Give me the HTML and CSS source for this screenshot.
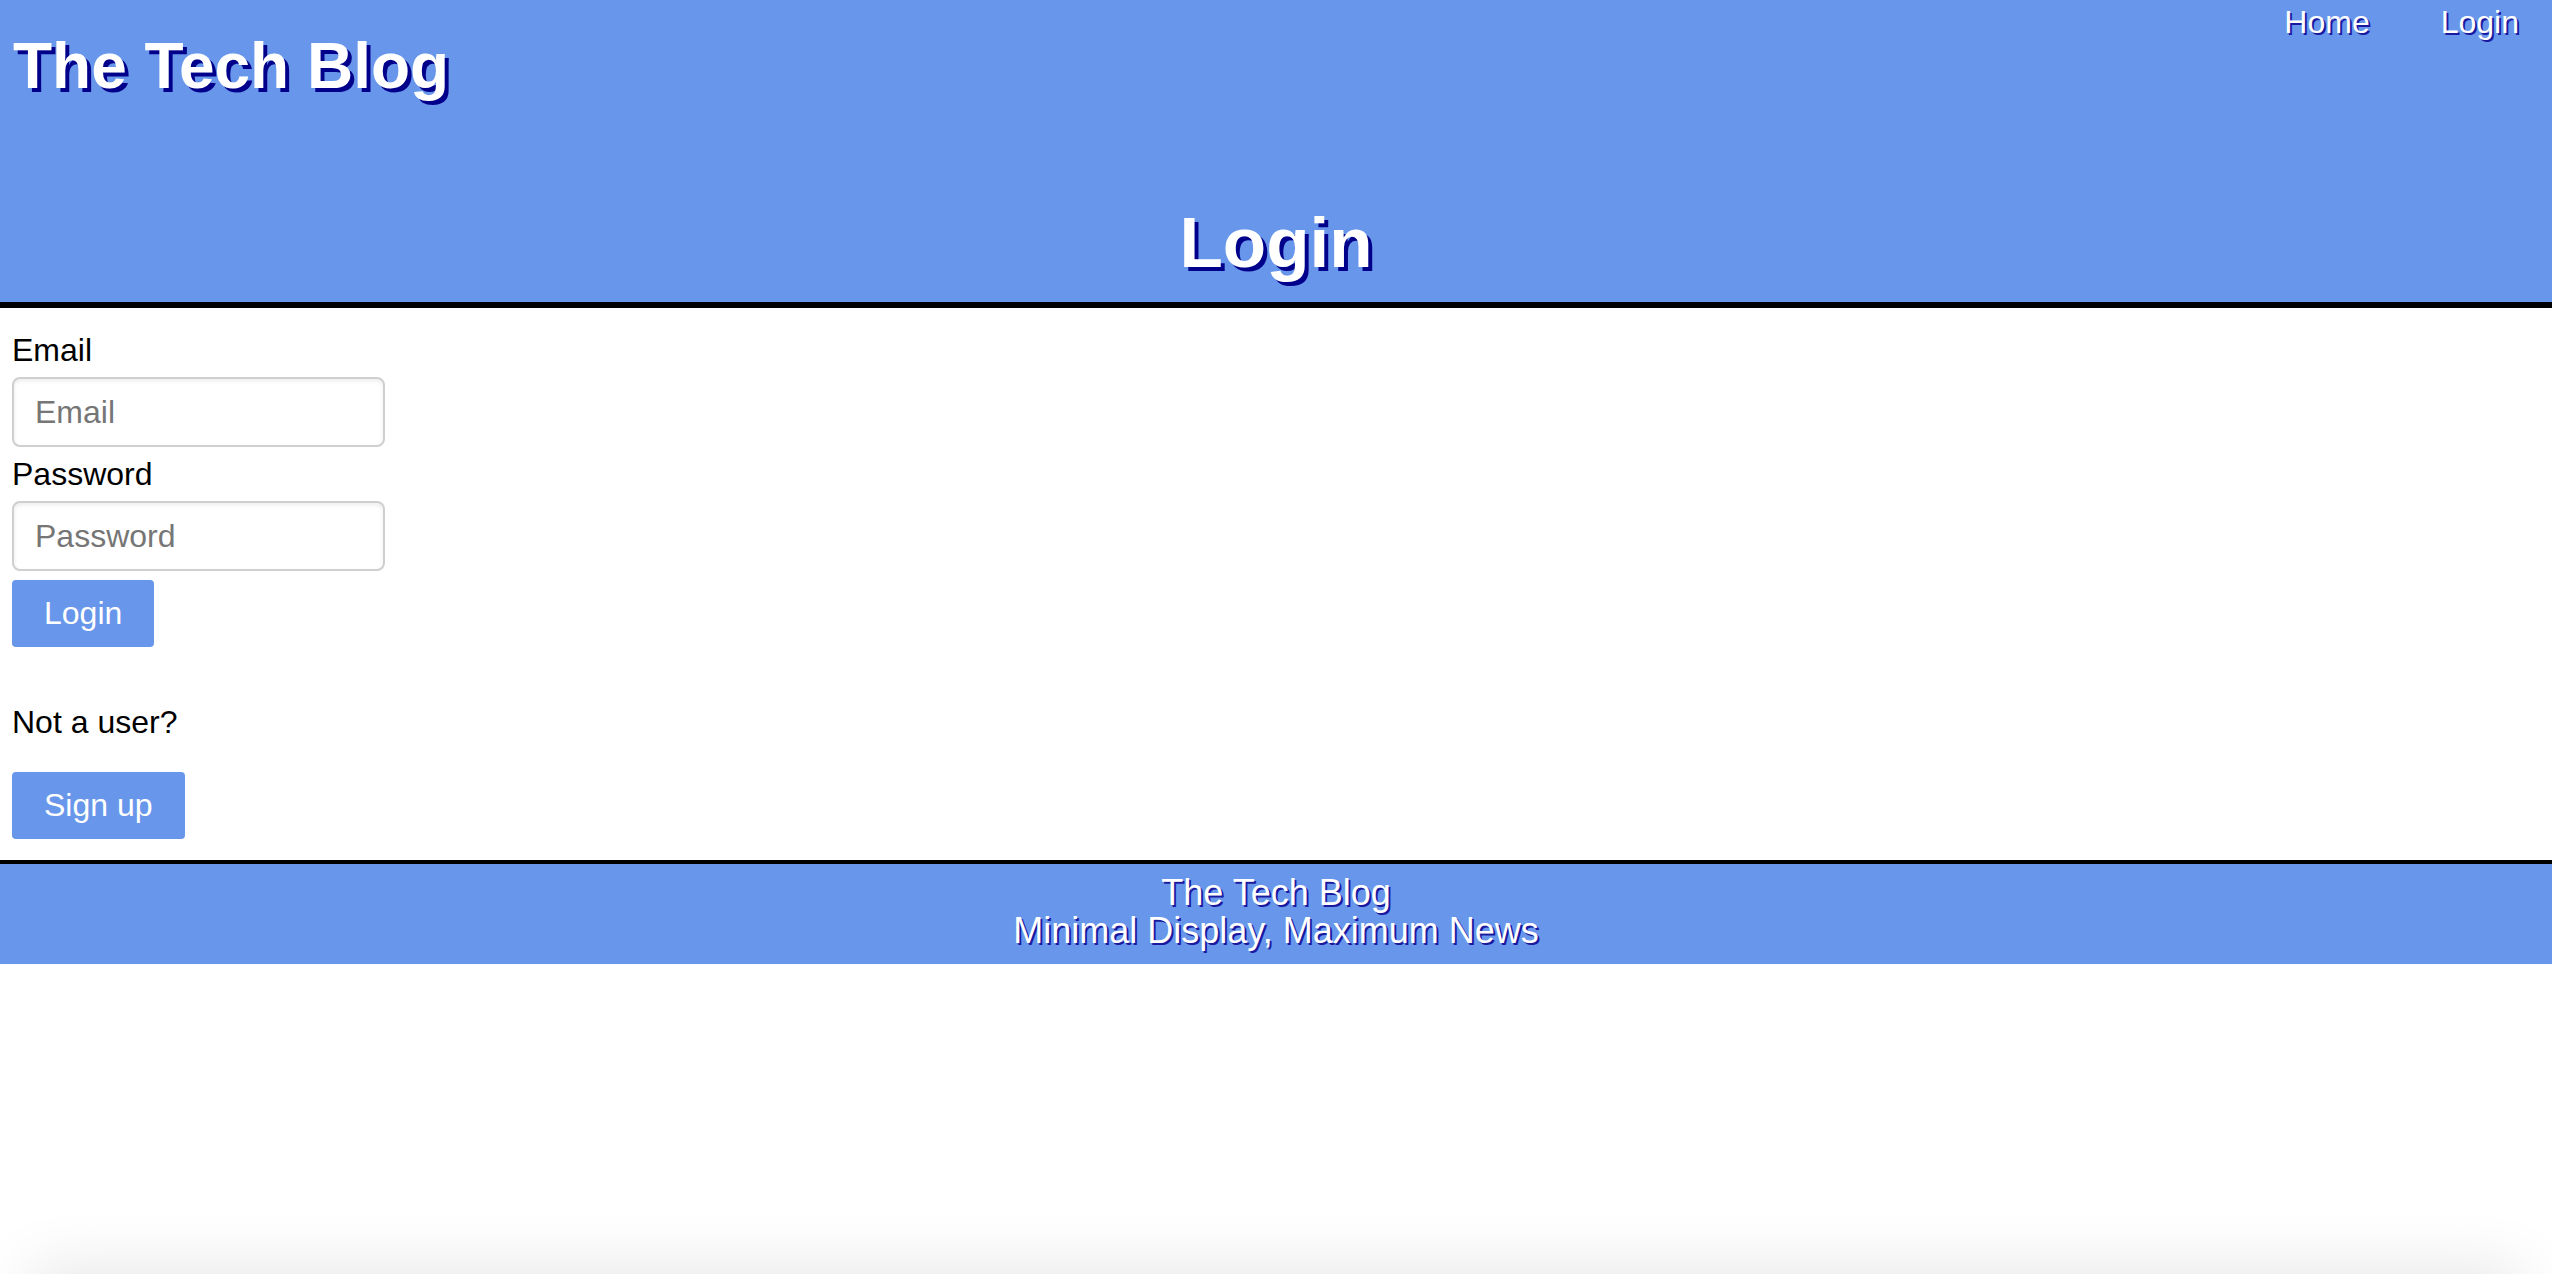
FILE: index.html
```html
<!DOCTYPE html>
<html lang="en">
<head>
<meta charset="utf-8">
<title>The Tech Blog - Login</title>
<link rel="stylesheet" href="styles.css">
</head>
<body>
<header class="site-header">
  <div class="topbar">
    <h1 class="brand">The Tech Blog</h1>
    <nav class="nav">
      <a class="nav-link" href="#">Home</a>
      <a class="nav-link" href="#">Login</a>
    </nav>
  </div>
  <h2 class="page-title">Login</h2>
</header>
<main class="content">
  <form class="login-form">
    <label class="field-label" for="email">Email</label>
    <input class="field-input" id="email" type="email" placeholder="Email">
    <label class="field-label field-label--spaced" for="password">Password</label>
    <input class="field-input" id="password" type="password" placeholder="Password">
    <button class="btn btn--login" type="button">Login</button>
  </form>
  <p class="signup-prompt">Not a user?</p>
  <button class="btn" type="button">Sign up</button>
</main>
<footer class="site-footer">
  <div class="footer-line">The Tech Blog</div>
  <div class="footer-line">Minimal Display, Maximum News</div>
</footer>
<div class="window-shadow"></div>
</body>
</html>
```
FILE: styles.css
```css
html, body {
  margin: 0;
  padding: 0;
  background: #ffffff;
}

body {
  font-family: "Liberation Sans", Arial, Helvetica, sans-serif;
  color: #000;
  font-size: 32px;
}

.site-header {
  background: #6796ea;
  border-bottom: 6px solid #000;
  padding-bottom: 20px;
}

.topbar {
  display: flex;
  justify-content: space-between;
  align-items: flex-start;
}

.brand {
  margin: 29px 0 0 13px;
  font-size: 64px;
  line-height: 74px;
  font-weight: bold;
  color: #fff;
  text-shadow: 4px 4px 0 #00008b;
}

.nav {
  display: flex;
  gap: 71px;
  padding: 4px 33px 0 0;
}

.nav-link {
  color: #fff;
  text-decoration: none;
  font-size: 32px;
  line-height: 37px;
  text-shadow: 2px 2px 0 #1a1aa0;
}

.page-title {
  margin: 101px 0 0;
  text-align: center;
  font-size: 71px;
  line-height: 78px;
  font-weight: bold;
  color: #fff;
  text-shadow: 4px 4px 0 #00008b;
}

.content {
  padding: 24px 12px 21px;
}

.login-form {
  display: flex;
  flex-direction: column;
  align-items: flex-start;
}

.field-label {
  display: block;
  font-size: 32px;
  line-height: 37px;
}

.field-label--spaced {
  margin-top: 9px;
}

.field-input {
  box-sizing: border-box;
  margin-top: 8px;
  width: 373px;
  height: 70px;
  padding: 0 21px;
  border: 2px solid #cfcfcf;
  border-radius: 8px;
  box-shadow: inset 0 2px 4px rgba(0, 0, 0, 0.08);
  font-family: "Liberation Sans", Arial, Helvetica, sans-serif;
  font-size: 32px;
  color: #000;
  background: #fff;
  outline: none;
}

.field-input::placeholder {
  color: #767676;
}

.btn {
  box-sizing: border-box;
  display: block;
  height: 67px;
  padding: 0 32px;
  border: none;
  border-radius: 4px;
  background: #6796ea;
  color: #fff;
  font-family: "Liberation Sans", Arial, Helvetica, sans-serif;
  font-size: 32px;
  line-height: 37px;
  cursor: pointer;
}

.btn--login {
  margin-top: 9px;
}

.signup-prompt {
  margin: 57px 0 31px;
  font-size: 32px;
  line-height: 37px;
}

.site-footer {
  background: #6796ea;
  border-top: 4px solid #000;
  padding: 10px 0 14px;
  text-align: center;
  color: #fff;
  font-family: "Liberation Sans Narrow", "Arial Narrow", "Liberation Sans", sans-serif;
  font-stretch: condensed;
  font-size: 36px;
  line-height: 38px;
  text-shadow: 2px 2px 0 #1a1aa0;
}

.window-shadow {
  position: fixed;
  left: 40px;
  right: 40px;
  bottom: -80px;
  height: 80px;
  box-shadow: 0 0 60px 10px rgba(0, 0, 0, 0.09);
  pointer-events: none;
}
```
